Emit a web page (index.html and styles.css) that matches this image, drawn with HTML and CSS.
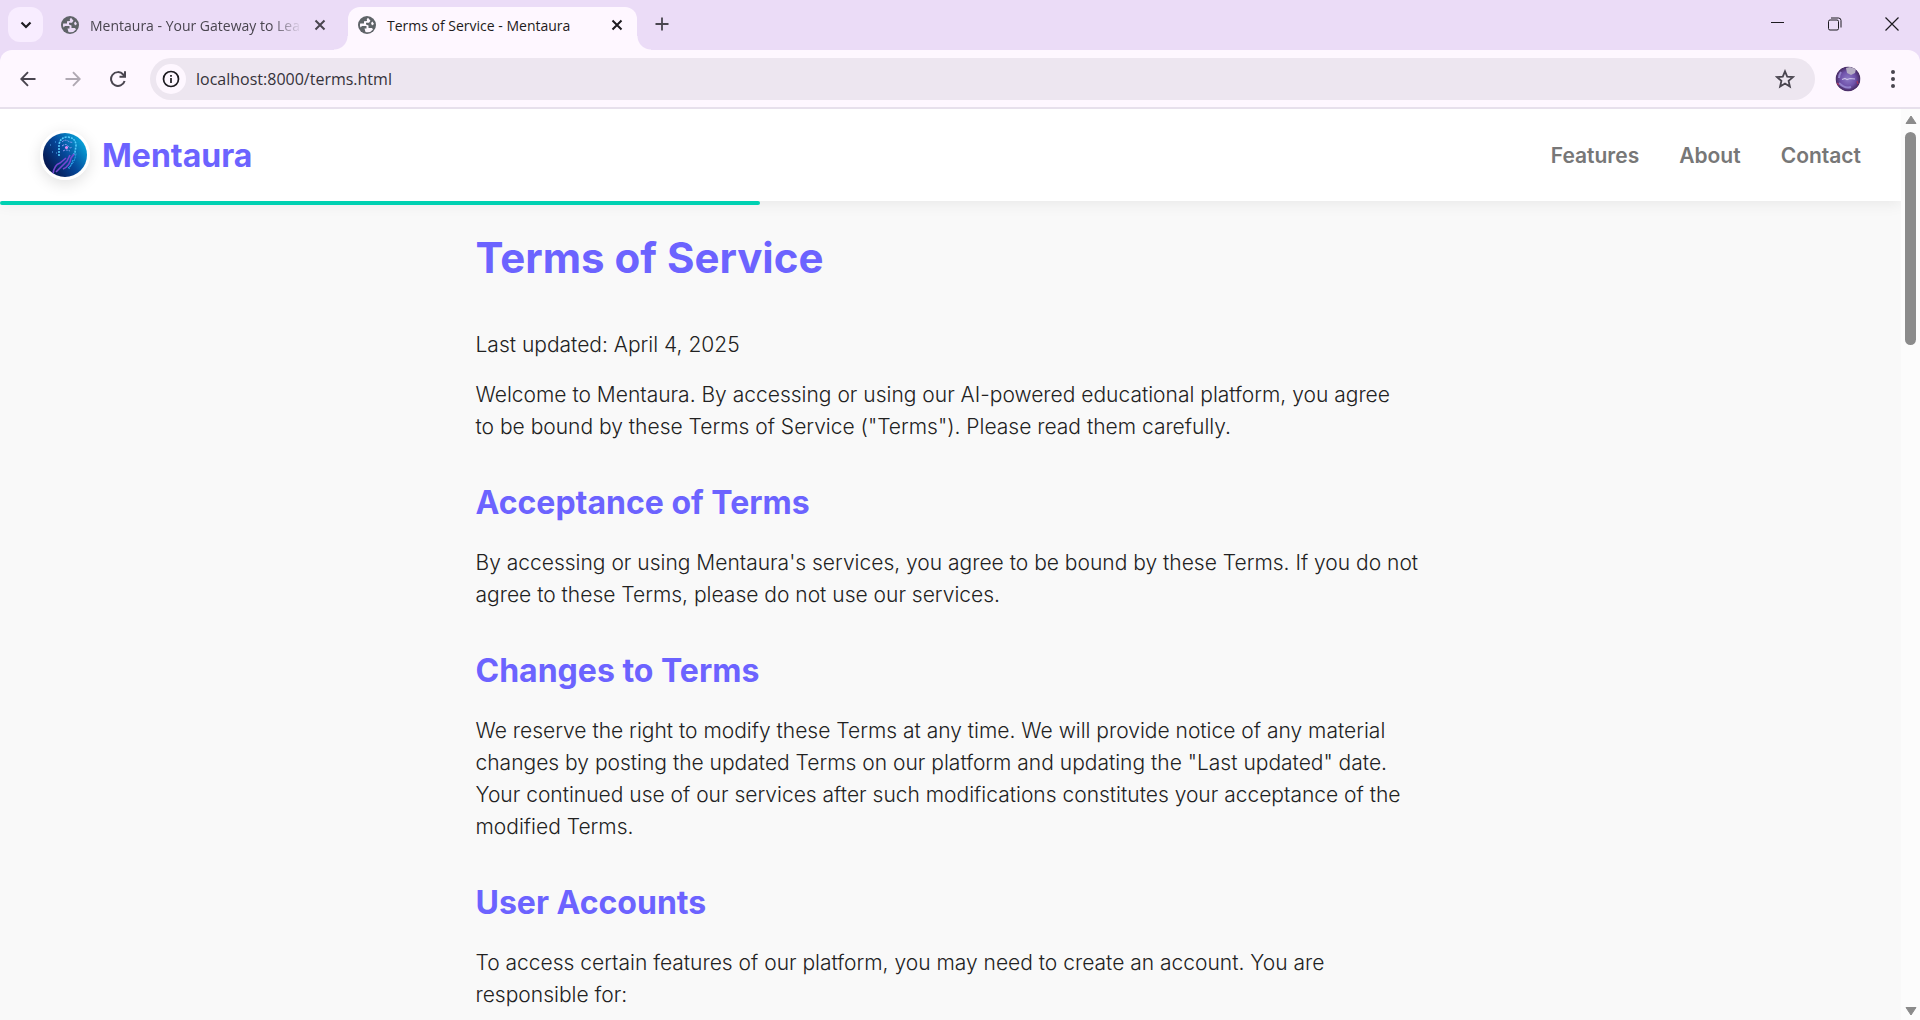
FILE: index.html
```html
<!DOCTYPE html>
<html lang="en">
<head>
<meta charset="utf-8">
<title>Terms of Service - Mentaura</title>
<link rel="stylesheet" href="styles.css">
</head>
<body>
<div class="tabstrip">
  <button class="tab-search" aria-label="Search tabs"><svg width="12" height="12" viewBox="0 0 12 12"><path d="M1.500 3.500 6 8l4.500-4.500" fill="none" stroke="#1d1b20" stroke-width="2.200"/></svg></button>
  <div class="tab">
    <svg class="globe" viewBox="0 0 18 18"><circle cx="9" cy="9" r="9" fill="#5f6368"/><path d="M10 1.800Q8 3 9 5L6 5.200V7.500H2.200Q1.500 9 2.500 11.500L4 10h4.500v2.500H6.500l1 3.500q5 1 7.500-2.500l-1-1.500h-3.500V9.500L8 8.500V6.800h3l1.500-2zM13 7l1.500-1.500L16 8l-2 1.500z" fill="#ebdcf7"/></svg>
    <span class="tab-title tab-title-fade">Mentaura - Your Gateway to Lea</span>
    <button class="tab-close" aria-label="Close tab"><svg width="12" height="12" viewBox="0 0 12 12"><path d="M1.500 1.500l9 9m0-9l-9 9" stroke="currentColor" stroke-width="2"/></svg></button>
  </div>
  <div class="tab tab-active">
    <svg class="globe" viewBox="0 0 18 18"><circle cx="9" cy="9" r="9" fill="#5f6368"/><path d="M10 1.800Q8 3 9 5L6 5.200V7.500H2.200Q1.500 9 2.500 11.500L4 10h4.500v2.500H6.500l1 3.500q5 1 7.500-2.500l-1-1.500h-3.500V9.500L8 8.500V6.800h3l1.500-2zM13 7l1.500-1.500L16 8l-2 1.500z" fill="#fef7ff"/></svg>
    <span class="tab-title">Terms of Service - Mentaura</span>
    <button class="tab-close" aria-label="Close tab"><svg width="12" height="12" viewBox="0 0 12 12"><path d="M1.500 1.500l9 9m0-9l-9 9" stroke="currentColor" stroke-width="2"/></svg></button>
  </div>
  <button class="new-tab" aria-label="New tab"><svg width="14" height="14" viewBox="0 0 14 14"><path d="M7 .5v13M.5 7h13" stroke="#49454f" stroke-width="1.800"/></svg></button>
  <div class="window-controls">
    <button aria-label="Minimize"><svg width="14" height="14" viewBox="0 0 14 14"><path d="M0 5.500h13" stroke="#1d1b20"/></svg></button>
    <button aria-label="Restore"><svg width="14" height="14" viewBox="0 0 14 14" fill="none" stroke="#1d1b20"><rect x=".5" y="3" width="10" height="10" rx="1.500"/><path d="M3 1h7.500q2.500 0 2.500 2.500v7"/></svg></button>
    <button aria-label="Close"><svg width="14" height="14" viewBox="0 0 14 14"><path d="M.5.5l13 13m0-13l-13 13" stroke="#1d1b20" stroke-width="1.200"/></svg></button>
  </div>
</div>
<div class="toolbar">
  <button class="tool" aria-label="Back"><svg width="16" height="16" viewBox="0 0 16 16"><path d="M15.500 8h-14M8 1.200 1.300 8 8 14.800" fill="none" stroke="#49454f" stroke-width="1.900"/></svg></button>
  <button class="tool" aria-label="Forward" disabled><svg width="16" height="16" viewBox="0 0 16 16"><path d="M.5 8h14M8 1.200 14.700 8 8 14.800" fill="none" stroke="#b0a9b3" stroke-width="1.900"/></svg></button>
  <button class="tool" aria-label="Reload"><svg width="16" height="16" viewBox="0 0 16 16"><path d="M14.600 10A6.900 6.900 0 1 1 13.200 3.500L14.800 5.200M15 .2v5.500H9.500" fill="none" stroke="#49454f" stroke-width="2"/></svg></button>
  <div class="omnibox">
    <button class="site-info" aria-label="View site information"><svg width="18" height="18" viewBox="0 0 18 18"><circle cx="9" cy="9" r="7.500" fill="none" stroke="#1d1b20" stroke-width="1.700"/><path d="M9 8v5M9 5v1.800" stroke="#1d1b20" stroke-width="1.700"/></svg></button>
    <input class="url" type="text" aria-label="Address" value="localhost:8000/terms.html">
    <button class="star" aria-label="Bookmark this tab"><svg width="20" height="20" viewBox="0 0 20 20"><path d="M10 2.300l2.200 5.300 5.800.5-4.400 3.800 1.300 5.600-4.900-3-4.900 3 1.300-5.600L2 8.100l5.800-.5z" fill="none" stroke="#49454f" stroke-width="1.800"/></svg></button>
  </div>
  <button class="tool" aria-label="Profile"><svg width="26" height="26" viewBox="0 0 26 26"><defs><radialGradient id="av"><stop offset="0" stop-color="#8d7ac6"/><stop offset=".6" stop-color="#6f52aa"/><stop offset="1" stop-color="#45285f"/></radialGradient><clipPath id="avc"><circle cx="13" cy="13" r="12.500"/></clipPath></defs><g clip-path="url(#avc)"><circle cx="13" cy="13" r="12.500" fill="url(#av)"/><path d="M11 2l4-1 6 2-1 4-4 2-4-2z" fill="#b5adc4"/><path d="M7 13.500l3-1 2 1 3-1 5 .5" stroke="#c9bfe6" stroke-width="1.200" fill="none"/><path d="M4 17q6 6 12 4M6 6q-2 3-2 6" stroke="#9382cc" stroke-width="2" fill="none"/><path d="M2 17l2 2M22 15l1 3" stroke="#a33562" stroke-width="1.200"/></g></svg></button>
  <button class="tool" aria-label="Menu"><svg width="6" height="20" viewBox="0 0 6 20" fill="#49454f"><circle cx="3" cy="3" r="2"/><circle cx="3" cy="10" r="2"/><circle cx="3" cy="17" r="2"/></svg></button>
</div>
<div class="viewport">
  <div class="page">
    <header class="site-header">
      <a class="brand" href="#">
        <svg class="logo" viewBox="0 0 44 44"><defs><linearGradient id="lg" x1=".1" y1=".8" x2=".95" y2=".2"><stop offset="0" stop-color="#07174e"/><stop offset=".5" stop-color="#05489a"/><stop offset="1" stop-color="#08a8dc"/></linearGradient></defs><rect width="44" height="44" fill="url(#lg)"/><path d="M16 23V12q1-8 9-8 8 1 8 9l-1 6-2 4" fill="none" stroke="#55cbfa" stroke-width="1.600" stroke-dasharray="2 1"/><path d="M19 9q3-3 6-1t5 1M19 13q4-3 6 0t4 1M20 18q3-2 7 0" fill="none" stroke="#8f9df5" stroke-dasharray="2 1"/><circle cx="23.500" cy="14.500" r="1.500" fill="#e78bf5"/><path d="M10 41q1-9 7-11l6-5M13 39l11-11 3-6M20 36q7-3 8-11l3-4" fill="none" stroke="#7548d0" stroke-width="1.600"/><path d="M25 35q7-5 8-15M30 27l-4 9" fill="none" stroke="#37b0f2" stroke-dasharray="2 1"/><path d="M7 12h1M9 19h1M12 9h1M13 20h1" stroke="#4fa8f0"/></svg>
        <span>Mentaura</span>
      </a>
      <nav class="nav"><a href="#">Features</a><a href="#">About</a><a href="#">Contact</a></nav>
    </header>
    <div class="progress"></div>
    <main class="content">
      <h1>Terms of Service</h1>
      <p>Last updated: April 4, 2025</p>
      <p>Welcome to Mentaura. By accessing or using our AI-powered educational platform, you agree<br>to be bound by these Terms of Service ("Terms"). Please read them carefully.</p>
      <h2>Acceptance of Terms</h2>
      <p>By accessing or using Mentaura's services, you agree to be bound by these Terms. If you do not<br>agree to these Terms, please do not use our services.</p>
      <h2>Changes to Terms</h2>
      <p>We reserve the right to modify these Terms at any time. We will provide notice of any material<br>changes by posting the updated Terms on our platform and updating the "Last updated" date.<br>Your continued use of our services after such modifications constitutes your acceptance of the<br>modified Terms.</p>
      <h2>User Accounts</h2>
      <p>To access certain features of our platform, you may need to create an account. You are<br>responsible for:</p>
    </main>
  </div>
  <div class="scrollbar">
    <svg width="12" height="10" viewBox="0 0 12 10"><path d="M6 1l5 7.500H1z" fill="#8b8b8b" stroke="#8b8b8b" stroke-linejoin="round"/></svg>
    <div class="track"><div class="thumb"></div></div>
    <svg width="12" height="10" viewBox="0 0 12 10"><path d="M6 9L1 1.500h10z" fill="#8b8b8b" stroke="#8b8b8b" stroke-linejoin="round"/></svg>
  </div>
</div>
</body>
</html>
```
FILE: styles.css
```css
* { box-sizing: border-box; }
body {
  margin: 0;
  height: 100vh;
  display: flex;
  flex-direction: column;
  overflow: hidden;
  background: #ebdcf7;
  font-family: "Open Sans", "Noto Sans", sans-serif;
}
button { border: 0; padding: 0; background: none; display: flex; align-items: center; justify-content: center; }
svg { display: block; flex: none; }
a { text-decoration: none; }

/* Tab strip */
.tabstrip { display: flex; height: 50px; flex: none; padding: 7px 0 0 8px; }
.tab-search { width: 35px; height: 35px; border-radius: 12px; background: #f8edff; }
.tab {
  position: relative;
  display: flex;
  align-items: center;
  width: 289px;
  height: 43px;
  padding: 0 12px 7px 10px;
  border-radius: 12px 12px 0 0;
  color: #49454f;
  font-size: 14px;
}
.tab:not(.tab-active) { width: 297px; margin-left: 8px; padding-right: 20px; }
.tab-active { background: #fef7ff; color: #1d1b20; }
.tab-active::before, .tab-active::after {
  content: "";
  position: absolute;
  bottom: 0;
  width: 14px;
  height: 14px;
}
.tab-active::before { right: 100%; background: radial-gradient(circle at 0 0, transparent 13px, #fef7ff 14px); }
.tab-active::after { left: 100%; background: radial-gradient(circle at 100% 0, transparent 13px, #fef7ff 14px); }
.globe { width: 18px; height: 18px; }
.tab-title { flex: 1; margin: 0 0 0 11px; white-space: nowrap; }
.tab-title-fade { mask-image: linear-gradient(to right, #000 180px, transparent 212px); }
.tab-close { color: inherit; width: 16px; height: 16px; }
.new-tab { width: 34px; height: 34px; margin-left: 8px; }
.window-controls { display: flex; margin-left: auto; }
.window-controls button { width: 57px; height: 34px; }

/* Toolbar */
.toolbar {
  display: flex;
  align-items: center;
  flex: none;
  height: 59px;
  padding: 1px 5px 0;
  background: #fef7ff;
  border-bottom: 2px solid #e7e0ec;
  border-radius: 12px 12px 0 0;
}
.tool { width: 45px; height: 42px; }
.omnibox {
  flex: 1;
  display: flex;
  align-items: center;
  height: 42px;
  margin: 0 10px;
  padding: 0 20px 0 6px;
  border-radius: 21px;
  background: #ede6f0;
}
.site-info { width: 30px; height: 30px; border-radius: 50%; background: #fef7ff; }
.url { flex: 1; border: 0; padding: 0 0 0 10px; background: none; font: 16px "Open Sans", sans-serif; color: #35323a; }

/* Viewport */
.viewport { flex: 1; min-height: 0; display: flex; background: #f9f9f9; }
.page { flex: 1; overflow: hidden; font-family: Inter, "Liberation Sans", sans-serif; color: #222; }
.site-header {
  position: relative;
  display: flex;
  align-items: center;
  justify-content: space-between;
  height: 92px;
  padding: 0 40px;
  background: #fff;
  box-shadow: 0 2px 15px rgba(0, 0, 0, .08);
}
.brand { display: flex; align-items: center; gap: 12px; color: #6c63ff; font-size: 32px; font-weight: 700; }
.logo { width: 50px; height: 50px; border: 3px solid #fff; border-radius: 50%; box-shadow: 0 4px 15px rgba(0, 0, 0, .12); }
.nav { display: flex; gap: 40px; }
.nav a { color: #777; font-size: 21px; font-weight: 600; }
.progress { position: relative; width: 40%; height: 4px; border-radius: 2px; background: #00d1b2; }
.content { max-width: 950px; margin: 0 auto; padding-top: 21px; white-space: nowrap; }
.content h1, .content h2 { color: #6c63ff; font-weight: 700; }
.content h1 { margin: 0 0 39px; font-size: 42px; line-height: 64px; }
.content h2 { margin: 36px 0 20px; font-size: 32px; line-height: 48px; }
.content p { margin: 0 0 18px; font-size: 21px; font-weight: 300; line-height: 32px; }

/* Scrollbar */
.scrollbar { display: flex; flex-direction: column; align-items: center; width: 19px; padding: 6px 0 4px; background: #fcfcfc; }
.track { flex: 1; padding-top: 7px; }
.thumb { width: 11px; height: 213px; border-radius: 6px; background: #8b8b8b; }
```
